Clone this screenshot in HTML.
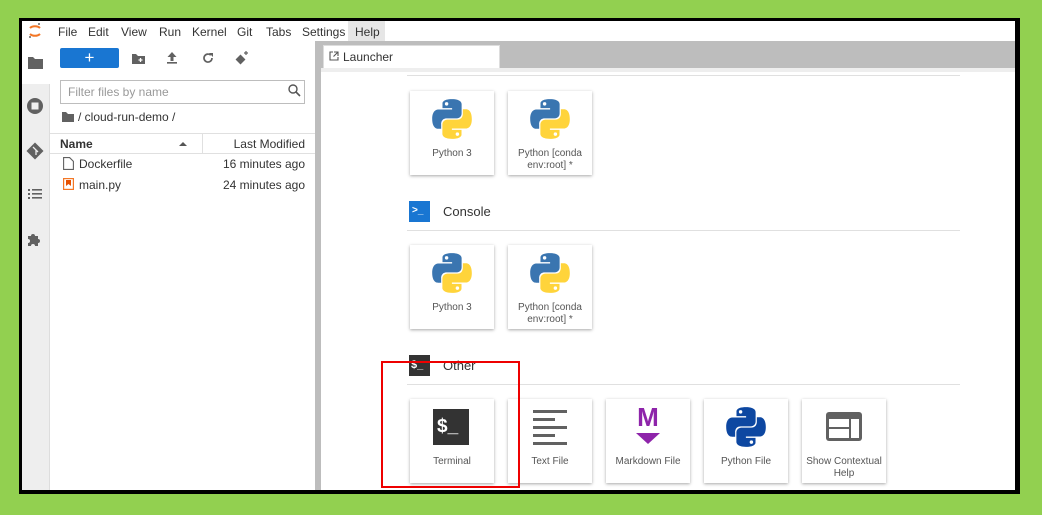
<!DOCTYPE html><html><head><meta charset="utf-8"><style>
*{margin:0;padding:0;box-sizing:border-box}
body{width:1042px;height:515px;background:#92d050;position:relative;overflow:hidden;font-family:"Liberation Sans",sans-serif;color:#333}
.a{position:absolute}
.frame{left:19px;top:18px;width:1001px;height:476px;background:#000}
.in{left:22px;top:21px;width:993px;height:469px;background:#fff;overflow:hidden}
.menu span{position:absolute;top:4px;font-size:12px;color:#333}
.card{position:absolute;width:84px;height:84px;background:#fff;box-shadow:0 1px 3px rgba(0,0,0,.35);text-align:center;font-size:10px;color:#555}
.card .t{position:absolute;left:0;right:0;top:57px;line-height:12px}
.card svg{position:absolute;left:22px;top:8px}
.hdr{position:absolute;font-size:13px;color:#333}
.fb{font-size:12px;color:#333}
.r{text-align:right;width:120px}
</style></head><body>
<div class="a frame"></div>
<div class="a in">
 <div class="a menu" style="left:0;top:0;width:993px;height:20px">
  <svg class="a" style="left:6px;top:1px" width="14" height="18" viewBox="0 0 14 18"><path d="M2 6 A6 4 0 0 1 12 6" stroke="#f37726" stroke-width="2" fill="none"/><path d="M2 12 A6 4 0 0 0 12 12" stroke="#f37726" stroke-width="2" fill="none"/><circle cx="2" cy="15" r="1" fill="#666"/><circle cx="11" cy="2" r="1" fill="#666"/></svg>
  <span style="left:36px">File</span><span style="left:66px">Edit</span><span style="left:99px">View</span><span style="left:137px">Run</span><span style="left:170px">Kernel</span><span style="left:215px">Git</span><span style="left:244px">Tabs</span><span style="left:280px">Settings</span>
  <div class="a" style="left:326px;top:0;width:37px;height:20px;background:#e6e6e6"></div><span style="left:333px">Help</span>
 </div>
 <div class="a" style="left:0;top:20px;width:28px;height:449px;background:#eee;border-right:1px solid #ddd"></div>
 <div class="a" style="left:0;top:20px;width:28px;height:43px;background:#fff"></div>
 <svg class="a" style="left:6px;top:35px" width="15" height="13" viewBox="0 0 15 13"><path d="M0 1h5l2 2h8v10H0z" fill="#616161"/></svg>
 <svg class="a" style="left:5px;top:77px" width="16" height="16"><circle cx="8" cy="8" r="8" fill="#616161"/><rect x="4.5" y="4.5" width="7" height="7" fill="#eee"/></svg>
 <svg class="a" style="left:4px;top:121px" width="18" height="18"><rect x="3" y="3" width="12" height="12" transform="rotate(45 9 9)" fill="#616161"/><path d="M7 5l3 3v5M10 8l2 2" stroke="#eee" stroke-width="1.3" fill="none"/></svg>
 <svg class="a" style="left:6px;top:167px" width="14" height="12"><g fill="#616161"><rect x="0" y="1" width="2" height="2"/><rect x="4" y="1" width="10" height="1.6"/><rect x="0" y="5" width="2" height="2"/><rect x="4" y="5" width="10" height="1.6"/><rect x="0" y="9" width="2" height="2"/><rect x="4" y="9" width="10" height="1.6"/></g></svg>
 <svg class="a" style="left:5px;top:210px" width="16" height="16" viewBox="0 0 16 16"><path d="M1 5h3a2 2 0 1 1 4 0h3v3a2 2 0 1 1 0 4v3H8a2 2 0 1 0-4 0H1v-3a2 2 0 1 0 0-4z" fill="#616161"/></svg>
 <div class="a" style="left:38px;top:27px;width:59px;height:20px;background:#1976d2;border-radius:2px;color:#fff;text-align:center;font-size:17px;line-height:19px">+</div>
 <svg class="a" style="left:110px;top:32px" width="13" height="11"><path d="M0 1h4l2 2h7v8H0z" fill="#616161"/><path d="M6.5 7h4M8.5 5v4" stroke="#fff" stroke-width="1.3"/></svg>
 <svg class="a" style="left:145px;top:31px" width="10" height="12"><path d="M5 0l4.5 5H6.5v4h-3V5H.5z M0 10h10v1.6H0z" fill="#616161"/></svg>
 <svg class="a" style="left:180px;top:31px" width="12" height="12"><path d="M10 6a4 4 0 1 1-1.2-2.8" stroke="#616161" stroke-width="1.7" fill="none"/><path d="M7 1h4v4z" fill="#616161"/></svg>
 <svg class="a" style="left:213px;top:30px" width="14" height="14"><rect x="2" y="5" width="7" height="7" transform="rotate(45 5.5 8.5)" fill="#616161"/><path d="M11 0v4M9 2h4" stroke="#616161" stroke-width="1.2"/></svg>
 <div class="a" style="left:38px;top:59px;width:245px;height:24px;border:1px solid #bdbdbd;font-size:12px;color:#999;padding:4px 7px">Filter files by name</div>
 <svg class="a" style="left:266px;top:63px" width="13" height="13"><circle cx="5" cy="5" r="4" stroke="#555" stroke-width="1.4" fill="none"/><path d="M8 8l4 4" stroke="#555" stroke-width="1.6"/></svg>
 <svg class="a" style="left:40px;top:91px" width="12" height="10"><path d="M0 0h4l2 2h6v8H0z" fill="#616161"/></svg>
 <div class="a fb" style="left:56px;top:89px">/ cloud-run-demo /</div>
 <div class="a" style="left:28px;top:112px;width:265px;height:21px;border-top:1px solid #e0e0e0;border-bottom:1px solid #e0e0e0"></div>
 <div class="a" style="left:180px;top:112px;width:1px;height:21px;background:#e0e0e0"></div>
 <div class="a fb" style="left:38px;top:116px;font-weight:bold">Name</div>
 <div class="a" style="left:157px;top:121px;width:0;height:0;border-left:4px solid transparent;border-right:4px solid transparent;border-bottom:4px solid #555"></div>
 <div class="a fb r" style="left:163px;top:116px">Last Modified</div>
 <svg class="a" style="left:41px;top:136px" width="11" height="13"><path d="M.6.6h6l3.8 3.8v8H.6z" stroke="#616161" stroke-width="1.1" fill="none"/></svg>
 <div class="a fb" style="left:57px;top:136px">Dockerfile</div><div class="a fb r" style="left:163px;top:136px">16 minutes ago</div>
 <svg class="a" style="left:41px;top:157px" width="11" height="12"><rect x=".6" y=".6" width="9.8" height="10.8" stroke="#f37726" stroke-width="1.2" fill="none"/><path d="M3 2h5v6L5.5 6 3 8z" fill="#e65100"/></svg>
 <div class="a fb" style="left:57px;top:157px">main.py</div><div class="a fb r" style="left:163px;top:157px">24 minutes ago</div>
 <div class="a" style="left:293px;top:20px;width:6px;height:449px;background:#bdbdbd"></div>
 <div class="a" style="left:299px;top:20px;width:694px;height:27px;background:#bdbdbd"></div>
 <div class="a" style="left:301px;top:24px;width:177px;height:23px;background:#fff;border:1px solid #ddd;border-bottom:none"></div>
 <svg class="a" style="left:307px;top:30px" width="10" height="10"><path d="M4 1H1v8h8V6" stroke="#555" stroke-width="1.1" fill="none"/><path d="M5 1h4v4M9 1L4.5 5.5" stroke="#555" stroke-width="1.1" fill="none"/></svg>
 <div class="a" style="left:321px;top:29px;font-size:12px">Launcher</div>
 <div class="a" style="left:299px;top:47px;width:694px;height:4px;background:#eee"></div>
 <div class="a" style="left:385px;top:54px;width:553px;height:1px;background:#e0e0e0"></div>
</div>
<svg width="0" height="0" style="position:absolute"><defs>
<g id="py"><path d="M54.9 0.4c-28 0-26.3 12.2-26.3 12.2v12.6h26.7v3.8H18S0 27 0 55.3c0 28.2 15.6 27.2 15.6 27.2h9.3V69.4s-.5-15.6 15.4-15.6h26.5s14.9.2 14.9-14.4V15.2S84 .4 54.9.4z" fill="var(--b)"/><path d="M54.9 0.4c-28 0-26.3 12.2-26.3 12.2v12.6h26.7v3.8H18S0 27 0 55.3c0 28.2 15.6 27.2 15.6 27.2h9.3V69.4s-.5-15.6 15.4-15.6h26.5s14.9.2 14.9-14.4V15.2S84 .4 54.9.4z" fill="var(--y)" transform="rotate(180 55 55.5)"/><circle cx="40" cy="13.5" r="4.8" fill="#fff"/><circle cx="70" cy="97.5" r="4.8" fill="#fff"/></g>
</defs></svg>
<div class="card" style="left:410px;top:91px"><svg width="40" height="40" viewBox="0 0 110 111" style="--b:#3a75b0;--y:#ffd43b"><use href="#py"/></svg><div class="t">Python 3</div></div>
<div class="card" style="left:508px;top:91px"><svg width="40" height="40" viewBox="0 0 110 111" style="--b:#3a75b0;--y:#ffd43b"><use href="#py"/></svg><div class="t">Python [conda<br>env:root] *</div></div>
<div class="a" style="left:409px;top:201px;width:21px;height:21px;background:#1976d2;color:#fff;font-size:10px;font-weight:bold;padding:4px 0 0 3px">&gt;_</div>
<div class="hdr" style="left:443px;top:204px">Console</div>
<div class="a" style="left:407px;top:230px;width:553px;height:1px;background:#e0e0e0"></div>
<div class="card" style="left:410px;top:245px"><svg width="40" height="40" viewBox="0 0 110 111" style="--b:#3a75b0;--y:#ffd43b"><use href="#py"/></svg><div class="t">Python 3</div></div>
<div class="card" style="left:508px;top:245px"><svg width="40" height="40" viewBox="0 0 110 111" style="--b:#3a75b0;--y:#ffd43b"><use href="#py"/></svg><div class="t">Python [conda<br>env:root] *</div></div>
<div class="a" style="left:409px;top:355px;width:21px;height:21px;background:#333;color:#fff;font-size:11px;font-weight:bold;padding:4px 0 0 2px">$_</div>
<div class="hdr" style="left:443px;top:358px">Other</div>
<div class="a" style="left:407px;top:384px;width:553px;height:1px;background:#e0e0e0"></div>
<div class="card" style="left:410px;top:399px"><div class="a" style="left:23px;top:10px;width:36px;height:36px;background:#333;color:#fff;font-size:19px;font-weight:bold;padding:7px 0 0 4px;text-align:left">$_</div><div class="t">Terminal</div></div>
<div class="card" style="left:508px;top:399px"><svg width="40" height="40" style="left:22px;top:8px"><g fill="#616161"><rect x="3" y="3" width="34" height="3"/><rect x="3" y="11" width="22" height="3"/><rect x="3" y="19" width="34" height="3"/><rect x="3" y="27" width="22" height="3"/><rect x="3" y="35" width="34" height="3"/></g></svg><div class="t">Text File</div></div>
<div class="card" style="left:606px;top:399px"><div class="a" style="left:0;right:0;top:3px;font-size:26px;font-weight:bold;color:#8e24aa">M</div><div class="a" style="left:30px;top:34px;width:0;height:0;border-left:12px solid transparent;border-right:12px solid transparent;border-top:11px solid #8e24aa"></div><div class="t">Markdown File</div></div>
<div class="card" style="left:704px;top:399px"><svg width="40" height="40" viewBox="0 0 110 111" style="--b:#0d47a1;--y:#0d47a1"><use href="#py"/></svg><div class="t">Python File</div></div>
<div class="card" style="left:802px;top:399px"><svg width="40" height="40" style="left:22px;top:10px"><rect x="2" y="3" width="36" height="29" rx="3" fill="#616161"/><rect x="5" y="10" width="20" height="8" fill="#fff"/><rect x="5" y="20" width="20" height="9" fill="#fff"/><rect x="27" y="10" width="8" height="19" fill="#fff"/></svg><div class="t">Show Contextual<br>Help</div></div>
<div class="a" style="left:381px;top:361px;width:139px;height:127px;border:2px solid #e00"></div>
</body></html>
